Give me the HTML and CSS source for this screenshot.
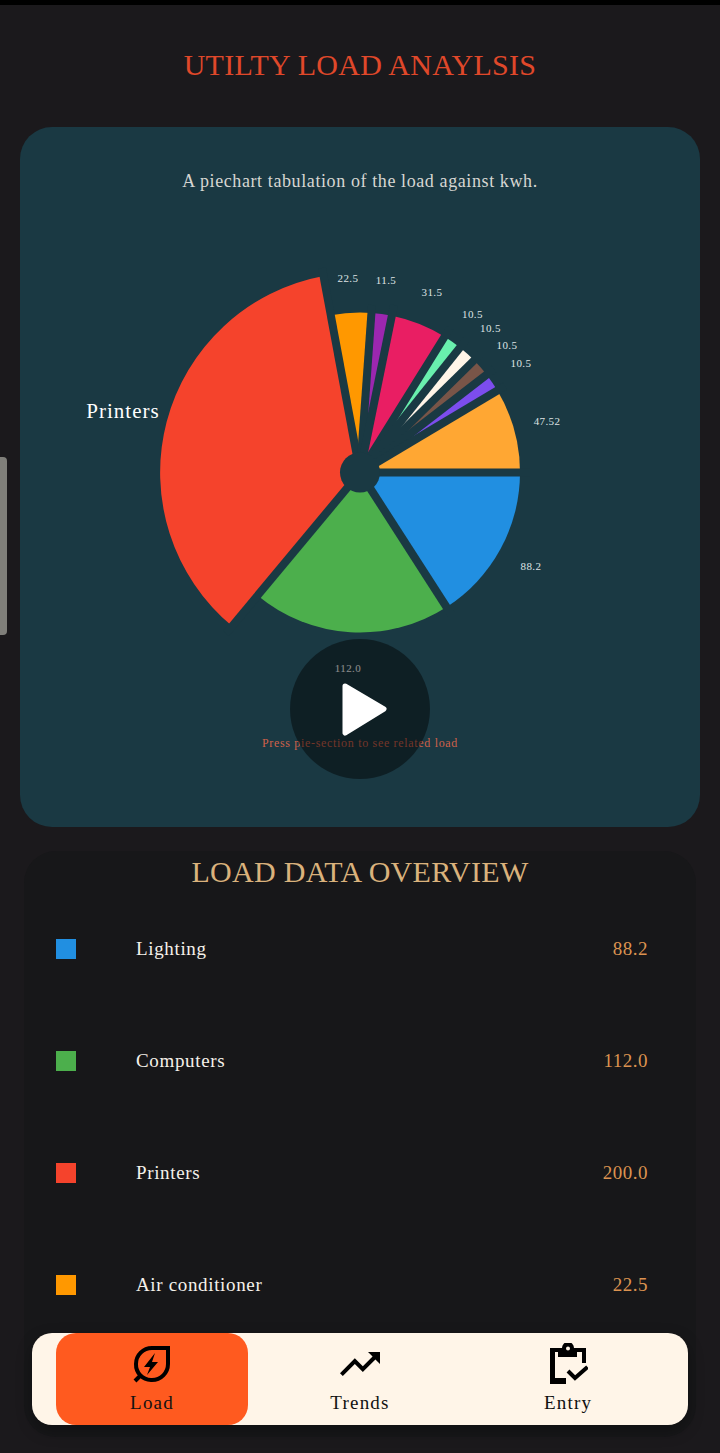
FILE: index.html
```html
<!DOCTYPE html>
<html lang="en">
<head>
  <meta charset="UTF-8" />
  <meta name="viewport" content="width=device-width, initial-scale=1.0" />
  <title>Utility Load Analysis</title>
  <link rel="stylesheet" href="styles.css">
</head>
<body>
  <div class="status-line"></div>
  <div class="side-handle"></div>

  <h1>UTILTY LOAD ANAYLSIS</h1>

  <section class="chart-card">
    <p class="chart-sub">A piechart tabulation of the load against kwh.</p>

    <svg class="pie" width="680" height="500" viewBox="20 236 680 500">
      <!-- slices, clockwise from 3 o'clock -->
      <path fill="#218fe1" d="M360 472.5 L520 472.5 A160 160 0 0 1 446.7 607 Z" />
      <path fill="#4caf4c" d="M360 472.5 L446.7 607 A160 160 0 0 1 257.6 595.4 Z" />
      <path fill="#f5432c" d="M360 472.5 L232 626.1 A200 200 0 0 1 323.5 275.9 Z" />
      <path fill="#ff9800" d="M360 472.5 L330.8 315.2 A160 160 0 0 1 371.4 312.9 Z" />
      <path fill="#9c27b0" d="M360 472.5 L371.4 312.9 A160 160 0 0 1 392 315.7 Z" />
      <path fill="#e91e63" d="M360 472.5 L392 315.7 A160 160 0 0 1 444.7 336.8 Z" />
      <path fill="#69f0ae" d="M360 472.5 L444.7 336.8 A160 160 0 0 1 460.2 347.8 Z" />
      <path fill="#fff5e8" d="M360 472.5 L460.2 347.8 A160 160 0 0 1 474.3 360.5 Z" />
      <path fill="#795548" d="M360 472.5 L474.3 360.5 A160 160 0 0 1 486.8 374.9 Z" />
      <path fill="#7c4dee" d="M360 472.5 L486.8 374.9 A160 160 0 0 1 497.4 390.6 Z" />
      <path fill="#ffa733" d="M360 472.5 L497.4 390.6 A160 160 0 0 1 520 472.5 Z" />

      <!-- gaps between slices -->
      <g class="pie-gaps">
        <path d="M360 472.5 L530 472.5" />
        <path d="M360 472.5 L451 614" />
        <path d="M360 472.5 L226 633.5" />
        <path d="M360 472.5 L322 268" />
        <path d="M360 472.5 L372 305" />
        <path d="M360 472.5 L394 305" />
        <path d="M360 472.5 L450 328" />
        <path d="M360 472.5 L466 340" />
        <path d="M360 472.5 L480 354.5" />
        <path d="M360 472.5 L494 369" />
        <path d="M360 472.5 L505 386" />
      </g>
      <circle class="pie-hole" cx="360" cy="472.5" r="20" />

      <g class="pie-values">
        <text x="348" y="282">22.5</text>
        <text x="386" y="284">11.5</text>
        <text x="432" y="296">31.5</text>
        <text x="472.500" y="318">10.5</text>
        <text x="490.500" y="332">10.5</text>
        <text x="507" y="349">10.5</text>
        <text x="521" y="367">10.5</text>
        <text x="547" y="425">47.52</text>
        <text x="531" y="570">88.2</text>
        <text x="348" y="672" class="dim">112.0</text>
      </g>
      <text class="pie-name" x="123" y="418">Printers</text>
    </svg>

    <p class="chart-hint">Press pie-section to see related load</p>

    <div class="play-btn">
      <svg width="140" height="140" viewBox="0 0 140 140">
        <path d="M55 47 L94 70 L55 94 Z" />
      </svg>
    </div>
  </section>

  <section class="overview">
    <h2>LOAD DATA OVERVIEW</h2>
    <div class="load-row">
      <span class="swatch swatch-blue"></span>
      <span class="load-name">Lighting</span>
      <span class="load-val">88.2</span>
    </div>
    <div class="load-row">
      <span class="swatch swatch-green"></span>
      <span class="load-name">Computers</span>
      <span class="load-val">112.0</span>
    </div>
    <div class="load-row">
      <span class="swatch swatch-red"></span>
      <span class="load-name">Printers</span>
      <span class="load-val">200.0</span>
    </div>
    <div class="load-row">
      <span class="swatch swatch-orange"></span>
      <span class="load-name">Air conditioner</span>
      <span class="load-val">22.5</span>
    </div>
  </section>

  <nav class="bottom-nav">
    <a class="nav-item active">
      <svg width="40" height="42" viewBox="1 0 40 42">
        <path class="icon-line" d="M37 5 V21 A16 16 0 0 1 21 37 H20 A15.500 15.500 0 0 1 5 21 A16 16 0 0 1 21 5 Z" />
        <path class="icon-line" d="M10 32 L4 38" />
        <path d="M24 10 L13 24 H19 L16 32 L27 19 H21 Z" />
      </svg>
      <span>Load</span>
    </a>
    <a class="nav-item">
      <svg width="48" height="42" viewBox="0 0 24 21">
        <path d="M16 4.500l2.290 2.290-4.880 4.880-4-4L2 15.090 3.410 16.500l6-6 4 4 6.300-6.290L22 10.500V4.500z" />
      </svg>
      <span>Trends</span>
    </a>
    <a class="nav-item">
      <svg width="40" height="42" viewBox="-2 0 40 42">
        <path fill-rule="evenodd" d="M0 5 H12 A6 6 0 0 1 24 5 H36 V20 H32 V9 H27 V14 H8 V9 H5 V35 H16 V41 H0 Z M18 3.500 A2 2 0 1 0 18 7.500 A2 2 0 1 0 18 3.500 Z" />
        <path class="icon-line" d="M18 28 L25 35 L37.500 24" />
      </svg>
      <span>Entry</span>
    </a>
  </nav>
</body>
</html>
```

FILE: styles.css
```css
html, body {
  margin: 0;
  height: 1453px;
  overflow: hidden;
}
body {
  position: relative;
  font-family: "Liberation Serif", serif;
  background-color: #1b191c;
  color: #fff;
}
.status-line {
  height: 5px;
  background: #000;
}
.side-handle {
  position: absolute;
  left: 0;
  top: 457px;
  width: 7px;
  height: 178px;
  background: #807f7a;
  border-radius: 0 4px 4px 0;
}
h1 {
  margin: 0;
  height: 122px;
  padding-top: 44px;
  box-sizing: border-box;
  font-size: 30px;
  line-height: 32px;
  font-weight: normal;
  letter-spacing: 0.3px;
  text-align: center;
  color: #e0482a;
}
.chart-card {
  position: relative;
  margin: 0 20px;
  height: 700px;
  padding-top: 44px;
  box-sizing: border-box;
  background: #1a3943;
  border-radius: 32px;
}
.chart-sub {
  margin: 0 0 45px;
  font-size: 18px;
  line-height: 20px;
  text-align: center;
  color: #d6d6d2;
  letter-spacing: 0.6px;
}
.pie {
  display: block;
}
.pie-gaps path {
  fill: none;
  stroke: #1a3943;
  stroke-width: 8;
}
.pie-hole {
  fill: #1a3943;
}
.pie-values text {
  font-size: 11px;
  letter-spacing: 0.4px;
  text-anchor: middle;
  fill: #dfe3e3;
}
.pie-values .dim {
  fill: #fff;
}
.pie-name {
  font-size: 21px;
  letter-spacing: 1px;
  text-anchor: middle;
  fill: #fff;
}
.chart-hint {
  margin: 0;
  font-size: 12px;
  line-height: 14px;
  letter-spacing: 0.68px;
  text-align: center;
  color: #d0614a;
}
.play-btn {
  position: absolute;
  left: 270px;
  top: 512px;
  width: 140px;
  height: 140px;
  border-radius: 50%;
  background: rgba(0, 0, 0, 0.45);
}
.play-btn svg {
  display: block;
}
.play-btn path {
  fill: #fff;
  stroke: #fff;
  stroke-width: 5;
  stroke-linejoin: round;
}
.overview {
  margin: 24px 24px 0;
  height: 586px;
  background: #171719;
  border-radius: 32px;
  overflow: hidden;
}
.overview h2 {
  margin: 0;
  height: 42px;
  font-size: 30px;
  line-height: 42px;
  font-weight: normal;
  letter-spacing: 0.3px;
  text-align: center;
  color: #dab27c;
}
.load-row {
  display: flex;
  align-items: center;
  height: 112px;
  padding: 0 48px 0 32px;
}
.swatch {
  width: 20px;
  height: 20px;
  margin-right: 60px;
}
.swatch-blue { background: #218fe1; }
.swatch-green { background: #4caf4c; }
.swatch-red { background: #f5432c; }
.swatch-orange { background: #ff9800; }
.load-name {
  flex: 1;
  font-size: 19px;
  letter-spacing: 0.65px;
  color: #f5f1ea;
}
.load-val {
  font-size: 19px;
  letter-spacing: 0.5px;
  color: #dc9350;
}
.bottom-nav {
  position: absolute;
  left: 32px;
  top: 1333px;
  width: 656px;
  height: 92px;
  padding: 0 24px;
  box-sizing: border-box;
  display: grid;
  grid-template-columns: repeat(3, 1fr);
  column-gap: 16px;
  background: #fff5e8;
  border-radius: 20px;
  box-shadow: 0 6px 16px rgba(0, 0, 0, 0.3);
}
.nav-item {
  display: flex;
  flex-direction: column;
  align-items: center;
  padding-top: 10px;
  border-radius: 20px;
  color: #111;
  font-size: 19px;
  line-height: 24px;
  letter-spacing: 1.2px;
}
.nav-item svg {
  display: block;
  margin-bottom: 6px;
}
.nav-item.active {
  background: #ff5a1f;
}
.icon-line {
  fill: none;
  stroke: #000;
  stroke-width: 4;
}
```
